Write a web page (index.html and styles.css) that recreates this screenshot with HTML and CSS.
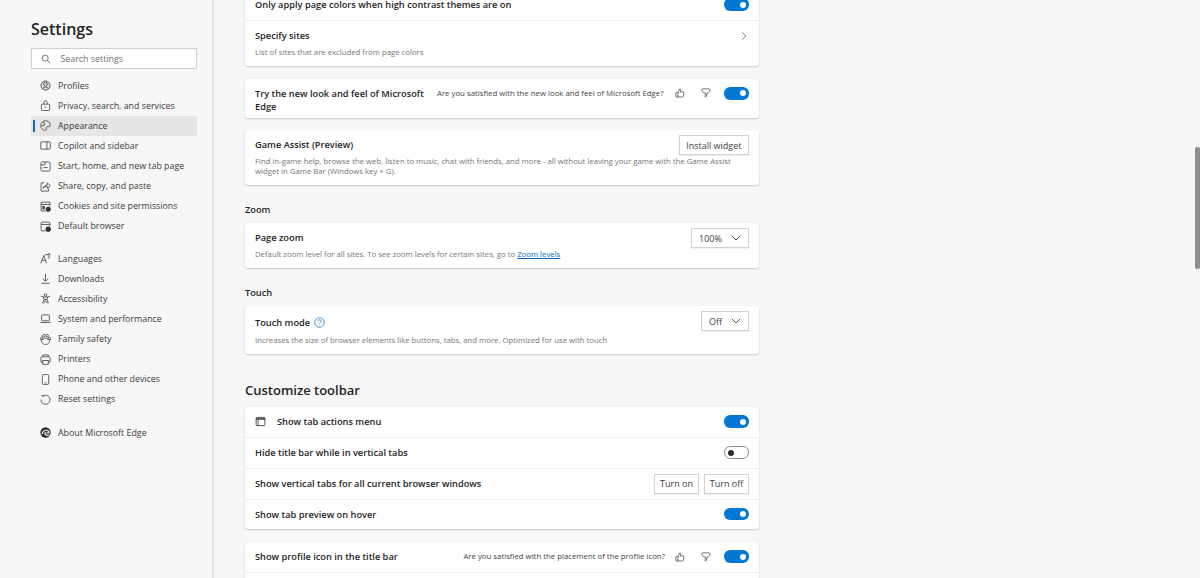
FILE: index.html
```html
<!DOCTYPE html>
<html lang="en">
<head>
<meta charset="utf-8">
<title>Settings</title>
<link rel="stylesheet" href="styles.css">
</head>
<body>
<aside class="sidebar">
  <h1 class="side-title">Settings</h1>
  <div class="search">
    <svg class="search-icon" viewBox="0 0 12 12"><circle cx="5" cy="5" r="3.6"/><path d="M7.7 7.7 11 11"/></svg>
    <span>Search settings</span>
  </div>
  <nav class="nav">
    <a class="nav-item"><svg viewBox="0 0 12 12"><circle class="tint" cx="6" cy="6" r="5"/><circle cx="6" cy="4.6" r="2"/><path d="M2.6 9.6C3.4 7.4 8.6 7.4 9.4 9.6"/></svg>Profiles</a>
    <a class="nav-item"><svg viewBox="0 0 12 12"><rect x="1.5" y="4.5" width="9" height="7" rx="1"/><path d="M4.2 4.5V2.600a1.800 1.800 0 0 1 3.600 0v1.900M5 7.800h2"/></svg>Privacy, search, and services</a>
    <a class="nav-item active"><svg viewBox="0 0 12 12"><path d="M6 .8a5.200 5.200 0 1 0 0 10.400c1.500 0 1.500-1.100 1-1.900-.6-1 .1-2 1.200-2h1.500c1 0 1.500-.6 1.500-1.500C11.200 2.800 8.900.8 6 .8Z"/><path d="M4 1.500 5 5.500l-3.500 1"/></svg>Appearance</a>
    <a class="nav-item"><svg viewBox="0 0 12 12"><rect x=".8" y="2" width="10.400" height="8" rx="1"/><path d="M7.500 2v8"/></svg>Copilot and sidebar</a>
    <a class="nav-item"><svg viewBox="0 0 12 12"><rect x="1" y="1" width="10" height="10" rx="1.500"/><path d="M1 4.200h4.500V1M3.500 7.200h5"/></svg>Start, home, and new tab page</a>
    <a class="nav-item"><svg viewBox="0 0 12 12"><path d="M4.500 2H1.200v9h8V8"/><path d="M3.500 8C4 5.500 6 4.200 8 4.200V2l3.300 3.200L8 8V6c-1.800 0-3.300.6-4.500 2Z"/></svg>Share, copy, and paste</a>
    <a class="nav-item"><svg viewBox="0 0 12 12"><path d="M6.500 10.800H1.200V1.200h9.600V6M1.200 3.800h9.600"/><path class="bold" d="M3 5.800h2v3H3z"/><circle class="fill" cx="9" cy="9" r="2.400"/></svg>Cookies and site permissions</a>
    <a class="nav-item"><svg viewBox="0 0 12 12"><path d="M6 10.800H2.200a1 1 0 0 1-1-1V2.200a1 1 0 0 1 1-1h7.600a1 1 0 0 1 1 1V6M1.200 3.800h9.600"/><circle class="fill" cx="9" cy="9" r="2.600"/></svg>Default browser</a>
    <div class="nav-gap"></div>
    <a class="nav-item"><svg viewBox="0 0 12 12"><path d="M.8 11.300 4.200 2.500 7 11.300M2 8h4M5.500 1.800h3.500M9.800.4v6M8.400 1.800 9.800.4 11.200 1.800"/></svg>Languages</a>
    <a class="nav-item"><svg viewBox="0 0 12 12"><path d="M6 .8v8M3 6l3 3 3-3M1.500 11.300h9"/></svg>Downloads</a>
    <a class="nav-item"><svg viewBox="0 0 12 12"><circle cx="6" cy="2.200" r="1.400"/><path d="M1 3.500c3 1.300 7 1.300 10 0M3.800 4.500 4.300 7 2.800 11.300M8.200 4.500 7.700 7l1.500 4.300M4.300 7h3.400M4 11.300l2-3 2 3"/></svg>Accessibility</a>
    <a class="nav-item"><svg viewBox="0 0 12 12"><rect x="1.800" y="2" width="8.400" height="6.500" rx=".8"/><path d="M.4 10.300h11.200"/></svg>System and performance</a>
    <a class="nav-item"><svg viewBox="0 0 12 12"><circle cx="4.200" cy="1.800" r="1.400"/><circle cx="7.800" cy="1.800" r="1.400"/><circle cx="1.800" cy="4.800" r="1.400"/><circle cx="10.200" cy="4.800" r="1.400"/><path d="M6 4.400c1 0 1.500.8 2.500 1.400h2c.8 1.600-.8 5.700-4.500 5.700S.7 7.400 1.500 5.800h2C4.500 5.200 5 4.400 6 4.400Z"/></svg>Family safety</a>
    <a class="nav-item"><svg viewBox="0 0 12 12"><path d="M2.800 8.800H1V4.500a1.500 1.500 0 0 1 1.500-1.500h7A1.500 1.500 0 0 1 11 4.500v4.300H9.200"/><path d="M3 3V1h6v2"/><rect x="3" y="7" width="6" height="4.200"/></svg>Printers</a>
    <a class="nav-item"><svg viewBox="0 0 12 12"><rect x="2.500" y=".6" width="7" height="10.800" rx="1.200"/><path d="M5 9.600h2"/></svg>Phone and other devices</a>
    <a class="nav-item"><svg viewBox="0 0 12 12"><path d="M2.800 2.400A5 5 0 1 1 1 6"/><path d="M1.800 .8 2.800 2.600 4.800 2.200"/></svg>Reset settings</a>
    <div class="nav-gap small"></div>
    <a class="nav-item"><svg class="edge" viewBox="0 0 12 12"><circle cx="6" cy="6" r="5.600"/><path class="cut" d="M2.300 8C2.400 4.800 5 3.300 7.200 3.600c1.900.3 2.800 1.600 2.700 3H5.200c-.1 2 2.400 3.200 4.800 2.200"/></svg>About Microsoft Edge</a>
  </nav>
</aside>

<main class="main">
  <div class="content">
    <section class="card first">
      <div class="row r31"><span class="label">Only apply page colors when high contrast themes are on</span><i class="toggle on"></i></div>
      <div class="row block specify">
        <div class="text"><div class="label">Specify sites</div><p class="desc">List of sites that are excluded from page colors</p></div>
        <svg class="chev" viewBox="0 0 8 12"><path d="M1.500 1 6.500 6 1.500 11"/></svg>
      </div>
    </section>

    <section class="card two">
      <div class="row block try">
        <span class="label wrap">Try the new look and feel of Microsoft Edge</span>
        <span class="ask">Are you satisfied with the new look and feel of Microsoft Edge?</span>
        <svg class="thumb" viewBox="0 0 12 12"><path d="M1.500 5.500h2v5.300h-2a.5.5 0 0 1-.5-.5V6a.5.5 0 0 1 .5-.5ZM3.500 5.800 5.800 1c1 0 1.400.8 1.100 1.800L6.400 4.600h3.300c.8 0 1.300.7 1.100 1.500l-.8 3.600c-.2.700-.7 1.100-1.400 1.100H3.500"/></svg>
        <svg class="thumb down" viewBox="0 0 12 12"><path d="M1 2.500C1 1.700 1.600 1 2.500 1h7c.8 0 1.500.6 1.500 1.500 0 1.700-1.500 3.400-3.800 3.700L6.500 9.800c-.2 1-1.400 1.200-1.800.3L5.400 6.200C2.800 6 1 4.300 1 2.500Z"/></svg>
        <i class="toggle on"></i>
      </div>
    </section>

    <section class="card">
      <div class="row block game">
        <div class="label">Game Assist (Preview)</div>
        <span class="btn wide">Install widget</span>
        <p class="desc">Find in-game help, browse the web, listen to music, chat with friends, and more - all without leaving your game with the Game Assist widget in Game Bar (Windows key + G).</p>
      </div>
    </section>

    <h3 class="sub">Zoom</h3>
    <section class="card">
      <div class="row block zoom">
        <div class="text"><div class="label">Page zoom</div><p class="desc">Default zoom level for all sites. To see zoom levels for certain sites, go to <a class="link">Zoom levels</a></p></div>
        <span class="btn select w58">100%<svg viewBox="0 0 10 6"><path d="M.8.800 5 5 9.200.800"/></svg></span>
      </div>
    </section>

    <h3 class="sub">Touch</h3>
    <section class="card">
      <div class="row block touch">
        <div class="text"><div class="label">Touch mode<svg class="help" viewBox="0 0 12 12"><circle cx="6" cy="6" r="5.200"/><path d="M4.300 4.700c0-2.200 3.500-2.200 3.500 0C7.800 6 6 6 6 7.400M6 8.800v.6"/></svg></div><p class="desc">Increases the size of browser elements like buttons, tabs, and more. Optimized for use with touch</p></div>
        <span class="btn select w48">Off<svg viewBox="0 0 10 6"><path d="M.8.800 5 5 9.200.800"/></svg></span>
      </div>
    </section>

    <h2 class="section">Customize toolbar</h2>
    <section class="card">
      <div class="row r30 lift"><svg class="tab-icon" viewBox="0 0 12 12"><rect x="1.200" y="1.500" width="9.600" height="9" rx="1"/><path class="thick" d="M1.200 3.200h9.600"/><path d="M3.300 3.500v7"/></svg><span class="label">Show tab actions menu</span><i class="toggle on"></i></div>
      <div class="row r31 lift"><span class="label">Hide title bar while in vertical tabs</span><i class="toggle off"></i></div>
      <div class="row r31 lift"><span class="label">Show vertical tabs for all current browser windows</span><span class="btn w45">Turn on</span><span class="btn w45 gap5">Turn off</span></div>
      <div class="row r30 lift"><span class="label">Show tab preview on hover</span><i class="toggle on"></i></div>
    </section>

    <section class="card last">
      <div class="row r30 lift">
        <span class="label">Show profile icon in the title bar</span>
        <span class="ask">Are you satisfied with the placement of the profile icon?</span>
        <svg class="thumb" viewBox="0 0 12 12"><path d="M1.500 5.500h2v5.300h-2a.5.5 0 0 1-.5-.5V6a.5.5 0 0 1 .5-.5ZM3.500 5.800 5.800 1c1 0 1.400.8 1.100 1.800L6.400 4.600h3.300c.8 0 1.300.7 1.100 1.500l-.8 3.600c-.2.700-.7 1.100-1.400 1.100H3.500"/></svg>
        <svg class="thumb down" viewBox="0 0 12 12"><path d="M1 2.500C1 1.700 1.600 1 2.500 1h7c.8 0 1.500.6 1.500 1.500 0 1.700-1.500 3.400-3.800 3.700L6.500 9.800c-.2 1-1.400 1.200-1.800.3L5.400 6.200C2.800 6 1 4.300 1 2.500Z"/></svg>
        <i class="toggle on"></i>
      </div>
      <div class="row r30"></div>
    </section>
  </div>
  <div class="scrollbar"><div class="thumb-bar"></div></div>
</main>
</body>
</html>
```

FILE: styles.css
```css
* { box-sizing: border-box; }
html, body { height: 100%; }
body {
  margin: 0;
  display: flex;
  height: 578px;
  overflow: hidden;
  background: #f7f7f7;
  color: #262626;
  font-family: "Open Sans", "Noto Sans", "Liberation Sans", sans-serif;
  font-size: 8.85px;
}

.sidebar {
  width: 214px;
  flex: none;
  padding: 19px 15px 0 31px;
  border-right: 2px solid #e4e4e4;
}
.side-title {
  margin: 0 0 9px;
  font-size: 16px;
  line-height: 20px;
  font-weight: 600;
  color: #242424;
}
.search {
  height: 21px;
  display: flex;
  align-items: center;
  background: #fff;
  border: 1px solid #cfcfcf;
  padding-left: 9px;
  color: #707070;
  gap: 9.5px;
  margin-bottom: 6.5px;
}
.search-icon { width: 10px; height: 10px; fill: none; stroke: #555; stroke-width: 1; }
.nav { display: flex; flex-direction: column; }
.nav-item {
  height: 20.14px;
  display: flex;
  align-items: center;
  gap: 7.5px;
  padding-left: 8.5px;
  color: #3b3b3b;
  position: relative;
}
.nav-item svg { width: 11px; height: 11px; flex: none; fill: none; stroke: #444; stroke-width: .9; }
.nav-item svg .fill { fill: #333; stroke: #333; }
.nav-item svg .bold { fill: #555; }
.nav-item svg .tint { fill: #d9d9d9; }
.nav-item.active { background: #e6e6e6; }
.nav-item.active::before {
  content: "";
  position: absolute;
  left: 2px;
  top: 4px;
  bottom: 4px;
  width: 2px;
  background: #0f6cbd;
}
.nav-gap { height: 12px; }
.nav-gap.small { height: 13px; }
.nav-item svg.edge { stroke: none; fill: #2f2f2f; }
.nav-item svg.edge .cut { fill: none; stroke: #f7f7f7; stroke-width: 1.2; }

.main { flex: 1; display: flex; position: relative; min-width: 0; }
.content { width: 514px; margin: -11px 0 0 31px; }
.card {
  background: #fff;
  border-radius: 3px;
  box-shadow: 0 1px 2px rgba(0,0,0,.2);
}
.card.first { margin-bottom: 13px; }
.card.two { margin-bottom: 12px; }
.row {
  display: flex;
  align-items: center;
  padding: 0 10px;
  border-top: 1px solid #efefef;
}
.row:first-child { border-top: 0; }
.r31 { height: 31px; }
.r30 { height: 30px; }
.lift { padding-bottom: 1px; }
.block { align-items: flex-start; }
.specify { height: 46px; padding-top: 8px; }
.try { height: 39px; padding-top: 8px; }
.game { height: 55px; padding-top: 5px; flex-wrap: wrap; align-content: flex-start; }
.zoom { height: 45px; padding-top: 5px; }
.touch { height: 48px; padding-top: 5px; }
.text { flex: 1; min-width: 0; }
.label { font-weight: 600; font-size: 9.25px; line-height: 13px; color: #242424; flex: 1; display: block; }
.game .label, .zoom .label { margin-top: 3px; }
.touch .label { display: flex; align-items: center; margin-top: 5px; }
.wrap { flex: none; width: 178px; }
.desc { margin: 5px 0 0; font-size: 7.75px; line-height: 10px; color: #767676; }
.game .desc { flex: 0 0 100%; max-width: 484px; margin-top: 1px; }
.touch .desc { margin-top: 6px; }
.link { color: #0f6cbd; text-decoration: underline; }
.ask { font-size: 7.8px; line-height: 13px; color: #444; }
.try .ask { margin-left: 4px; flex: 1; }
.thumb { width: 10px; height: 10px; fill: none; stroke: #444; stroke-width: .9; margin-left: 10px; flex: none; }
.try .thumb { margin-top: 1px; }
.thumb.down { margin-left: 16px; margin-right: 13px; }
.toggle {
  width: 25px;
  height: 12.5px;
  border-radius: 6.25px;
  flex: none;
  position: relative;
  display: block;
}
.toggle::after {
  content: "";
  position: absolute;
  top: 3.25px;
  width: 6px;
  height: 6px;
  border-radius: 50%;
}
.toggle.on { background: #0078d4; }
.toggle.on::after { right: 3px; background: #fff; }
.toggle.off { background: #fff; border: 1px solid #8a8a8a; }
.toggle.off::after { left: 3px; top: 2.25px; background: #2b2b2b; }
.btn {
  flex: none;
  height: 20px;
  padding: 0 6px;
  display: inline-flex;
  align-items: center;
  justify-content: space-between;
  border: 1px solid #d1d1d1;
  box-shadow: 0 1px 1px rgba(0,0,0,.06);
  background: #fff;
  color: #3d3d3d;
  font-size: 9px;
  white-space: nowrap;
}
.wide { padding: 0 6.5px; }
.w45 { width: 45px; padding: 0; justify-content: center; }
.gap5 { margin-left: 5px; }
.select { padding: 0 7px; }
.select svg { width: 10px; height: 6px; fill: none; stroke: #555; stroke-width: 1; }
.w58 { width: 58px; }
.w48 { width: 48px; }
.sub {
  margin: 18px 0 7px;
  font-size: 9.25px;
  line-height: 13px;
  font-weight: 600;
  color: #242424;
}
.section {
  margin: 27px 0 8px;
  font-size: 13px;
  line-height: 18px;
  font-weight: 600;
  color: #242424;
}
.help { width: 11px; height: 11px; margin-left: 4px; fill: none; stroke: #0f6cbd; stroke-width: .8; }
.chev { width: 6px; height: 10px; margin: 2px 2px 0 0; fill: none; stroke: #555; stroke-width: 1; }
.tab-icon { width: 11px; height: 11px; flex: none; margin-right: 11px; fill: none; stroke: #333; stroke-width: .9; }
.tab-icon .thick { stroke-width: 1.6; }
.card.last { margin-top: 13px; }
.scrollbar { position: absolute; right: 0; top: 0; bottom: 0; width: 5px; }
.thumb-bar { position: absolute; left: 0; right: 0; top: 147px; height: 122px; background: #8f8f8f; border-radius: 2px; }
```
